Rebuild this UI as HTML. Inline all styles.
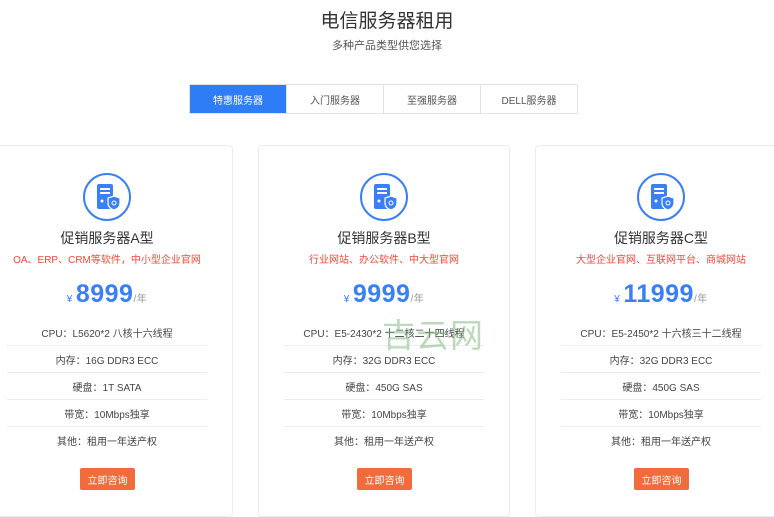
<!DOCTYPE html>
<html><head><meta charset="utf-8"><style>
body{margin:0;width:774px;height:500px;overflow:hidden;background:#fff;font-family:"Liberation Sans","Noto Sans CJK SC",sans-serif;position:relative}
.h1{position:absolute;top:6px;left:0;width:774px;text-align:center;font-size:19px;color:#333}
.h2{position:absolute;top:37px;left:0;width:774px;text-align:center;font-size:11px;color:#555}
.tabs{position:absolute;top:84px;left:189px;display:flex;border:1px solid #e3e3e3;height:28px}
.tabs div{width:96px;display:flex;align-items:center;justify-content:center;font-size:10px;color:#555;border-left:1px solid #e3e3e3}
.tabs div:first-child{border-left:none;background:#2e7cf6;color:#fff}
.card{position:absolute;top:145px;width:250px;height:370px;border:1px solid #ececec;border-radius:4px;text-align:center}
.ic{position:absolute;left:101px;top:27px;width:44px;height:44px;border:2px solid #3a7ff6;border-radius:50%}
.t{position:absolute;top:82px;left:0;width:100%;font-size:14px;color:#333}
.s{position:absolute;top:105px;left:0;width:100%;font-size:10px;color:#f04a3a}
.p{position:absolute;top:134px;left:0;width:100%;font-size:25px;font-weight:bold;color:#3a7ff6;letter-spacing:0.5px}
.p small{font-size:10px;font-weight:normal;margin-right:3px}
.p i{font-size:10px;font-style:normal;font-weight:normal;color:#999}
.rows{position:absolute;top:173px;left:25px;width:200px}
.rows div{height:26px;display:flex;align-items:center;justify-content:center;font-size:10px;color:#444;border-bottom:1px solid #eee}
.rows div:last-child{border-bottom:none}
.b{position:absolute;top:322px;left:98px;width:55px;height:22px;display:flex;align-items:center;justify-content:center;background:#f26b3d;color:#fff;font-size:10px;border-radius:2px}
.wm{position:absolute;left:382px;top:309px;font-size:33px;color:rgba(120,180,120,.5);letter-spacing:1px}
</style></head><body>
<div class="h1">电信服务器租用</div>
<div class="h2">多种产品类型供您选择</div>
<div class="tabs"><div>特惠服务器</div><div>入门服务器</div><div>至强服务器</div><div>DELL服务器</div></div>

<div class="card" style="left:-19px">
<div class="ic"><svg width="44" height="44" viewBox="0 0 44 44"><rect x="12" y="9" width="16" height="25" rx="2" fill="#3a7ff6"/><rect x="15" y="13" width="10" height="2" fill="#fff"/><rect x="15" y="17" width="10" height="2" fill="#fff"/><circle cx="17" cy="26" r="1.5" fill="#fff"/><path d="M29 21l6 2v5c0 4-3 6-6 7-3-1-6-3-6-7v-5z" fill="#3a7ff6" stroke="#fff" stroke-width="1.2"/><circle cx="29" cy="28" r="2" fill="none" stroke="#fff"/></svg></div>
<div class="t">促销服务器A型</div>
<div class="s">OA、ERP、CRM等软件，中小型企业官网</div>
<div class="p"><small>¥</small>8999<i>/年</i></div>
<div class="rows"><div>CPU：L5620*2 八核十六线程</div><div>内存：16G DDR3 ECC</div><div>硬盘：1T SATA</div><div>带宽：10Mbps独享</div><div>其他：租用一年送产权</div></div>
<div class="b">立即咨询</div></div>

<div class="card" style="left:258px">
<div class="ic"><svg width="44" height="44" viewBox="0 0 44 44"><rect x="12" y="9" width="16" height="25" rx="2" fill="#3a7ff6"/><rect x="15" y="13" width="10" height="2" fill="#fff"/><rect x="15" y="17" width="10" height="2" fill="#fff"/><circle cx="17" cy="26" r="1.5" fill="#fff"/><path d="M29 21l6 2v5c0 4-3 6-6 7-3-1-6-3-6-7v-5z" fill="#3a7ff6" stroke="#fff" stroke-width="1.2"/><circle cx="29" cy="28" r="2" fill="none" stroke="#fff"/></svg></div>
<div class="t">促销服务器B型</div>
<div class="s">行业网站、办公软件、中大型官网</div>
<div class="p"><small>¥</small>9999<i>/年</i></div>
<div class="rows"><div>CPU：E5-2430*2 十二核二十四线程</div><div>内存：32G DDR3 ECC</div><div>硬盘：450G SAS</div><div>带宽：10Mbps独享</div><div>其他：租用一年送产权</div></div>
<div class="b">立即咨询</div></div>

<div class="card" style="left:535px">
<div class="ic"><svg width="44" height="44" viewBox="0 0 44 44"><rect x="12" y="9" width="16" height="25" rx="2" fill="#3a7ff6"/><rect x="15" y="13" width="10" height="2" fill="#fff"/><rect x="15" y="17" width="10" height="2" fill="#fff"/><circle cx="17" cy="26" r="1.5" fill="#fff"/><path d="M29 21l6 2v5c0 4-3 6-6 7-3-1-6-3-6-7v-5z" fill="#3a7ff6" stroke="#fff" stroke-width="1.2"/><circle cx="29" cy="28" r="2" fill="none" stroke="#fff"/></svg></div>
<div class="t">促销服务器C型</div>
<div class="s">大型企业官网、互联网平台、商城网站</div>
<div class="p"><small>¥</small>11999<i>/年</i></div>
<div class="rows"><div>CPU：E5-2450*2 十六核三十二线程</div><div>内存：32G DDR3 ECC</div><div>硬盘：450G SAS</div><div>带宽：10Mbps独享</div><div>其他：租用一年送产权</div></div>
<div class="b">立即咨询</div></div>
<div class="wm">吉云网</div>
</body></html>
